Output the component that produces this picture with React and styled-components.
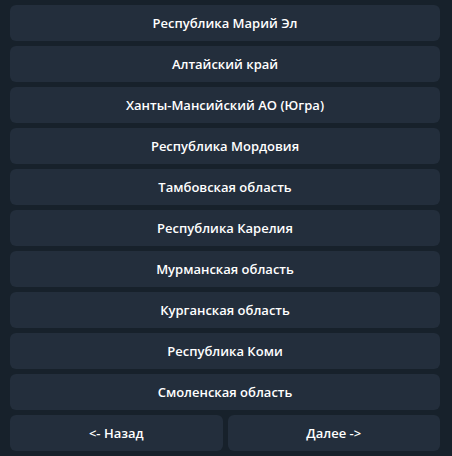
import React from 'react';
import styled, { createGlobalStyle } from 'styled-components';

const GlobalStyle = createGlobalStyle`
    html, body {
        margin: 0;
        padding: 0;
        background: #17212b;
    }
    body {
        font-family: "Open Sans", "Liberation Sans", sans-serif;
    }
`;

const Keyboard = styled.div`
    display: grid;
    grid-template-columns: 1fr 1fr;
    gap: 5px;
    padding: 5px 12px 5px 10px;
    width: 452px;
    box-sizing: border-box;
`;

const KeyButton = styled.button`
    grid-column: ${props => props.half ? 'span 1' : 'span 2'};
    height: 36px;
    border: none;
    border-radius: 6px;
    background: #232e3c;
    color: #ffffff;
    font-family: "Open Sans", "Liberation Sans", sans-serif;
    font-weight: 600;
    font-size: 13px;
    cursor: pointer;
    padding: 0 8px;
    &:hover {
        background: #2b3848;
    }
`;

const regions = [
    'Республика Марий Эл',
    'Алтайский край',
    'Ханты-Мансийский АО (Югра)',
    'Республика Мордовия',
    'Тамбовская область',
    'Республика Карелия',
    'Мурманская область',
    'Курганская область',
    'Республика Коми',
    'Смоленская область',
];

export default function App() {
    return (
        <>
            <GlobalStyle />
            <Keyboard>
                {regions.map(name => (
                    <KeyButton key={name}>{name}</KeyButton>
                ))}
                <KeyButton half>{'<- Назад'}</KeyButton>
                <KeyButton half>{'Далее ->'}</KeyButton>
            </Keyboard>
        </>
    );
}
